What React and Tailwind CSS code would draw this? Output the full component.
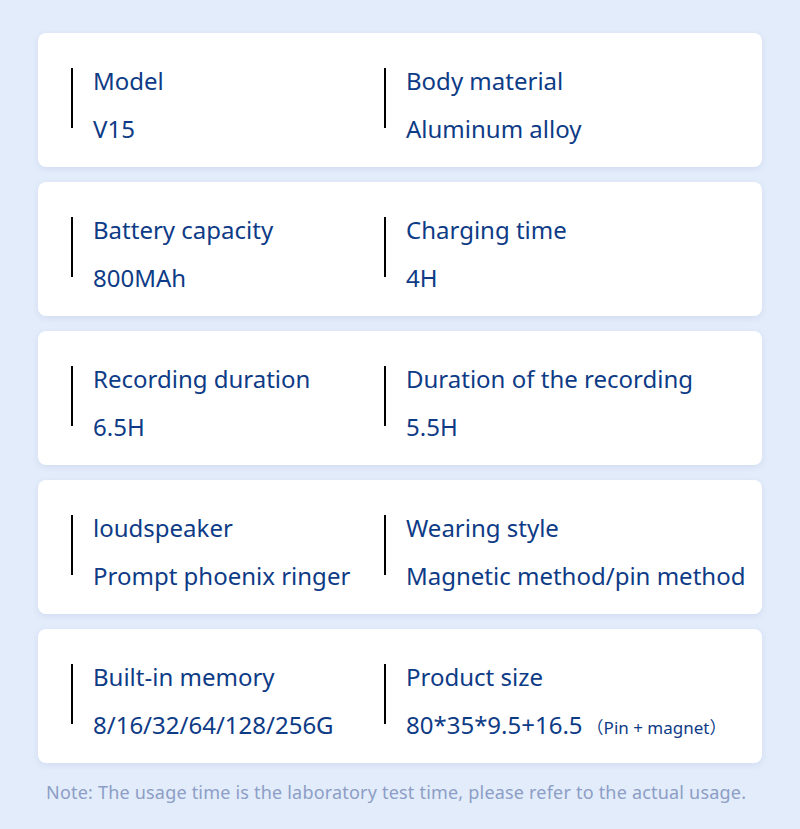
import React from 'react'

const rows = [
  [
    { label: 'Model', value: 'V15' },
    { label: 'Body material', value: 'Aluminum alloy' },
  ],
  [
    { label: 'Battery capacity', value: '800MAh' },
    { label: 'Charging time', value: '4H' },
  ],
  [
    { label: 'Recording duration', value: '6.5H' },
    { label: 'Duration of the recording', value: '5.5H' },
  ],
  [
    { label: 'loudspeaker', value: 'Prompt phoenix ringer' },
    { label: 'Wearing style', value: 'Magnetic method/pin method' },
  ],
  [
    { label: 'Built-in memory', value: '8/16/32/64/128/256G' },
    { label: 'Product size', value: '80*35*9.5+16.5', note: '（Pin + magnet）' },
  ],
]

const Spec = ({ item, wide }) => (
  <div className={`flex items-start ${wide ? 'w-[313px]' : 'flex-1'}`}>
    <div className="w-[2px] h-[60px] mt-[2px] bg-black shrink-0" />
    <div className="ml-[20px] flex flex-col gap-[18px] whitespace-nowrap">
      <div className="text-[24px] leading-[30px]">{item.label}</div>
      <div className="text-[24px] leading-[30px]">
        {item.value}
        {item.note && <span className="ml-[4px] text-[17px]">{item.note}</span>}
      </div>
    </div>
  </div>
)

export default function App() {
  return (
    <div
      className="w-[800px] h-[829px] bg-[#e3ecfa] pt-[33px] px-[38px] text-[#0e3b86]"
      style={{ fontFamily: '"Noto Sans", "Open Sans", "Noto Sans CJK SC", sans-serif' }}
    >
      <div className="flex flex-col gap-[15px]">
        {rows.map((pair, i) => (
          <div
            key={i}
            className="h-[134px] bg-white rounded-[8px] shadow-[0_2px_6px_rgba(120,150,200,0.18)] pl-[33px] pt-[33px] flex"
          >
            <Spec item={pair[0]} wide />
            <Spec item={pair[1]} />
          </div>
        ))}
      </div>
      <p className="mt-[17px] pl-[8px] text-[18px] leading-[24px] tracking-[0.2px] text-[#8c9ec6] whitespace-nowrap">
        Note: The usage time is the laboratory test time, please refer to the actual usage.
      </p>
    </div>
  )
}
